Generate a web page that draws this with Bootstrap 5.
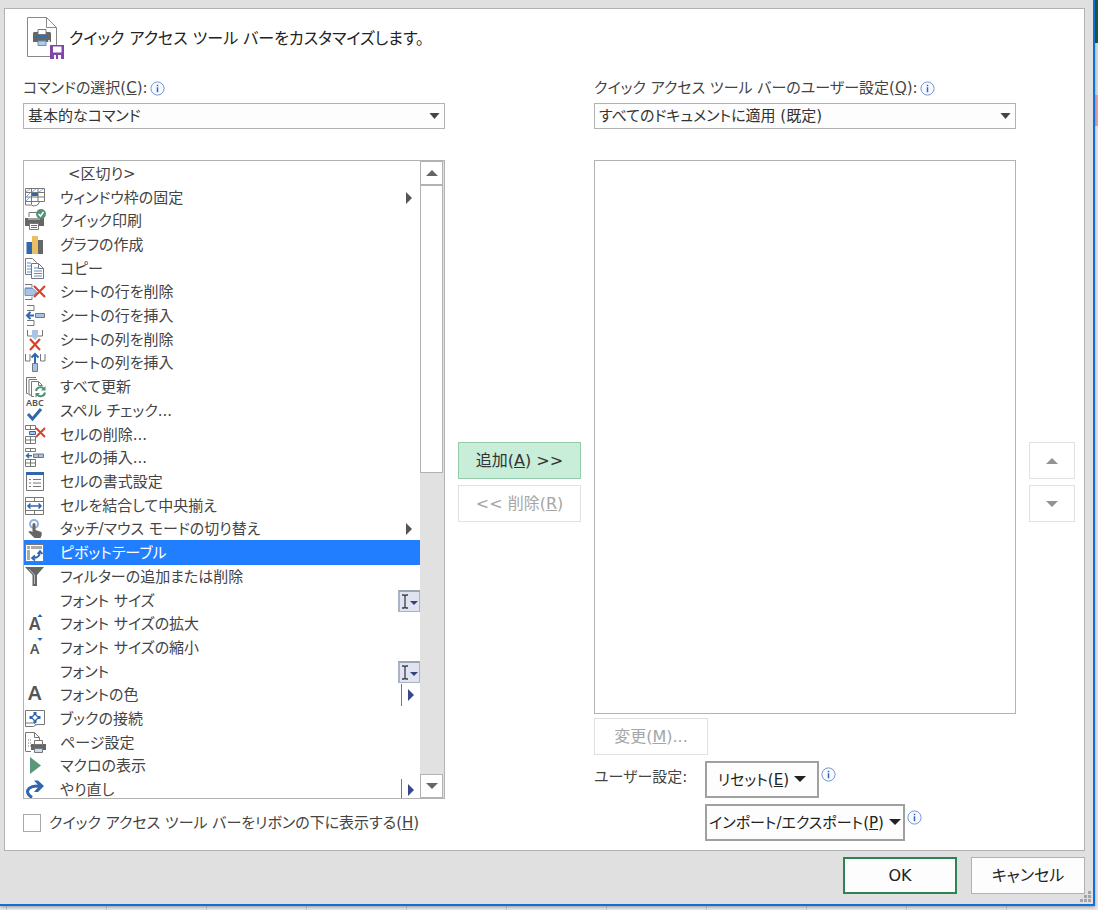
<!DOCTYPE html>
<html lang="ja">
<head>
<meta charset="utf-8">
<meta name="viewport" content="width=device-width, initial-scale=1">
<title>クイック アクセス ツール バー</title>
<link href="https://cdn.jsdelivr.net/npm/bootstrap@5.3.0/dist/css/bootstrap.min.css" rel="stylesheet">
<style>
  :root { --edge: #b2b2b2; --ink: #444; }
  body, button, select {
    font-family: "DejaVu Sans", "Noto Sans CJK JP", sans-serif;
    font-feature-settings: "palt";
  }
  body {
    font-size: 15px; line-height: 24px; color: var(--ink);
    min-height: 100vh; padding-right: 3px;
    background:
      linear-gradient(#1d5a3c 0 43px, #d5dce2 43px 95px, #e5a3ab 95px 126px, #e4e6e8 126px) right top / 3px 100% no-repeat,
      repeating-linear-gradient(90deg, transparent 0 6px, #c8c8c8 6px 7px, transparent 7px 100px) #e4e6e8;
  }
  .dialog { background: #e0e0e0; border: solid #0f70d7; border-width: 0 2px 2px 0; padding: 8px 8px 10px 4px; box-shadow: 0 1px 3px #0005; }
  .panel { background: #fff; border: 1px solid var(--edge); padding: 8px 9px 9px 18px; }
  .heading { font-size: 16px; color: #222; margin: 0; font-weight: 400; line-height: 24px; }
  .columns { display: grid; grid-template-columns: minmax(0,1fr) 123px minmax(0,1fr) 46px; column-gap: 13px; }
  .field-label { height: 22px; }
  .info { width: 15px; height: 15px; flex: none; margin-left: 2px; }
  .drop + .info { margin-top: 6px; }
  .form-select {
    height: 26px; padding: 0 24px 0 4px; border: 1px solid var(--edge); border-radius: 0; color: #333;
    font-size: 15px; line-height: 24px; background-color: #fdfdfd;
    background-image: url("data:image/svg+xml,%3Csvg xmlns='http://www.w3.org/2000/svg' viewBox='0 0 10 6'%3E%3Cpath d='M0 0h10L5 6z' fill='%23444'/%3E%3C/svg%3E");
    background-size: 11px 6px; background-position: right 4px center;
  }
  .body-row { margin-top: 31px; }
  .listbox { border: 1px solid var(--edge); }
  .commands { height: 639px; overflow: hidden; }
  .chosen { height: 554px; }
  .entries { display: grid; grid-auto-rows: 1fr; height: 641px; padding-top: 1px; min-width: 0; border-radius: 0; }
  .entries .list-group-item { display: flex; align-items: center; gap: 12px; border: 0; padding: 0; min-height: 0; line-height: 22px; background: none; color: var(--ink); white-space: nowrap; }
  .entries .list-group-item.active { background: #217fff; color: #fff; }
  .entries svg.ico { width: 24px; height: 24px; flex: none; overflow: visible; fill: none; stroke: #777; stroke-width: 1; }
  .ico text { font-family: "Noto Sans", sans-serif; }
  .entries .tail { margin-left: auto; }
  .split { border-left: 1px solid #777; height: 22px; width: 19px; padding-left: 6px; display: flex; align-items: center; }
  .combo { width: 22px; height: 22px; background: #e1e4f0; border: 1px solid #a9b3c4; border-top: 2px solid #9aa5b4; border-left-width: 2px; display: flex; }
  .scroller { width: 24px; padding-right: 1px; background: #e1e1e1; flex: none; }
  .scroller button, .thumb { width: 23px; border: 1px solid var(--edge); background: #fff; padding: 0; display: flex; align-items: center; justify-content: center; }
  .scroller button { height: 24px; }
  .thumb { height: 288px; }
  .cmd { border-radius: 0; height: 37px; padding: 0 2px; font-size: 16px; line-height: 24px; border: 1px solid var(--edge); background: #fdfdfd; color: #222; white-space: nowrap; }
  .cmd:disabled { opacity: 1; color: #a6a6a6; border-color: #e1e1e1; background: #fff; }
  .cmd.add { background: #c8edd8; border-color: #93cbab; color: #333; }
  .cmd.ok { border: 2px solid #2a8453; }
  .cmd.drop { border: 2px solid #a0a0a0; font-size: 15px; }
  .dropdown-toggle::after { border-width: 6px 6px 0; margin-left: 5px; vertical-align: 3px; }
  .w-std { width: 114px; }
  .w-long { width: 200px; }
  .caption { width: 111px; }
  .stack { display: flex; flex-direction: column; align-items: flex-start; gap: 6px; }
  .side { margin-top: 365px; align-items: stretch; }
  .buttons { margin-top: 6px; gap: 14px; }
  .form-check-input[type=checkbox] { width: 18px; height: 18px; border: 1px solid #aaa; border-radius: 0; margin: 0; }
  .grip { right: 1px; bottom: 1px; }
</style>
</head>
<body>
<svg class="d-none" xmlns="http://www.w3.org/2000/svg">
  <symbol id="info" viewBox="0 0 15 15"><circle cx="7.500" cy="7.500" r="6.600" fill="#f8faff" stroke="#7697d2"/><path d="M7.500 6.200v5M7.500 3.700v1.500" stroke="#3c64ad" stroke-width="1.500"/></symbol>
  <symbol id="up" viewBox="0 0 12 6"><path d="M0 6h12L6 0z" fill="#666"/></symbol>
  <symbol id="down" viewBox="0 0 12 6"><path d="M0 0h12L6 6z" fill="#666"/></symbol>
  <symbol id="right" viewBox="0 0 6 12"><path d="M0 0v12l6-6z"/></symbol>
  <symbol id="ibeam" viewBox="0 0 19 19"><path d="M2 3h2l1 1 1-1h2M2 16h2l1-1 1 1h2M5 4v11" stroke="#3a3d50" stroke-width="1.300" fill="none"/><path d="M10 9h8l-4 4z" fill="#34437c"/></symbol>
</svg>
<main class="dialog position-relative">
  <section class="panel">
    <header class="d-flex align-items-center gap-1">
      <svg width="38" height="44" viewBox="0 0 38 44" class="ms-1" fill="none">
        <path d="M.5.500h19l10 10v29H.500z" fill="#fff" stroke="#888"/><path d="M19.500.500v10h10" stroke="#888"/>
        <path d="M7 15h16l1 1v9H6v-9z" fill="#666"/><path d="M11 12.500h8v5h-8z" fill="#fff" stroke="#777"/><path d="M9 18h12v3H9z" fill="#2f70b5"/><path d="M11 24h8v4.500h-8z" fill="#a9cdec" stroke="#6b8fb5"/><circle cx="22" cy="24" r="1" fill="#fff"/>
        <path d="M23 28h14v14H23z" fill="#8145ae"/><path d="M26 29.500h8.500v6H26zM27 38h2v4h-2zM31 38h3v4h-3z" fill="#fff"/>
      </svg>
      <h1 class="heading">クイック アクセス ツール バーをカスタマイズします。</h1>
    </header>
    <div class="columns mt-3">
      <div>
        <div class="field-label d-flex align-items-center"><label for="source">コマンドの選択(<u>C</u>):</label><svg class="info"><use href="#info"/></svg></div>
        <select id="source" class="form-select mt-1"><option>基本的なコマンド</option></select>
        <div class="body-row listbox commands d-flex">
          <ul class="list-group entries flex-grow-1" role="listbox" aria-label="コマンド">
            <li class="list-group-item"><svg class="ico"></svg><span class="ps-2">&lt;区切り&gt;</span></li>
            <li class="list-group-item"><svg class="ico"><path d="M1.500 2.500h19v13h-19zM1.500 6.500h19M1.500 11h19M7.500 2.500v16M14 2.500v13M1.500 15v4h6l2 1 4-1 2-3"/><path d="M2 6l4-3M8 6l4-3M15 6l4-3M2 11l4-4M2 15l4-4" stroke="#88aede"/><path d="M8 7h6v3H8z" fill="#2f66ad" stroke="none"/></svg>ウィンドウ枠の固定<svg class="tail me-2" width="6" height="12" fill="#555"><use href="#right"/></svg></li>
            <li class="list-group-item"><svg class="ico"><path d="M5 8V3.500h9V8" fill="#fff"/><path d="M1 9h19v8H1z" fill="#666" stroke="none"/><path d="M4 10h12" stroke="#ddd"/><path d="M5.500 14.500h9v6h-9z" fill="#fff" stroke="#777"/><path d="M7 16.500h6M7 18.500h6" stroke="#3c78c4"/><circle cx="17" cy="5" r="5" fill="#559477" stroke="none"/><path d="M14.500 5l2 2 3-4" stroke="#fff" stroke-width="1.500"/></svg>クイック印刷</li>
            <li class="list-group-item"><svg class="ico"><path d="M2.500 9H8v12H2.500z" fill="#2f66ad" stroke="none"/><path d="M8 3h6v18H8z" fill="#e8bf62" stroke="none"/><path d="M14 7h5v14h-5z" fill="#666" stroke="none"/></svg>グラフの作成</li>
            <li class="list-group-item"><svg class="ico"><path d="M1.500 1.500h7l4 4v12h-11z" fill="#fff"/><path d="M3 6h4M3 9h5M3 12h5M3 15h5" stroke="#5d8ecb"/><path d="M7.500 6.500h7l5 5v10h-12z" fill="#fff"/><path d="M14.500 6.500v5h5"/><path d="M10 11h4M10 14h8M10 16.500h8M10 19h8" stroke="#5d8ecb"/></svg>コピー</li>
            <li class="list-group-item"><svg class="ico"><path d="M1 4.500h7v3M1 19.500h7v-3M1 8h7"/><path d="M1 8.500h8l4 4-4 3H1z" fill="#a9c3e6" stroke="#7394bf"/><path d="M10 6l11 11M21 6L10 17" stroke="#d8432a" stroke-width="2.200"/></svg>シートの行を削除</li>
            <li class="list-group-item"><svg class="ico"><path d="M3 1.500h7v5H3M3 16.500h7v5H3"/><path d="M11.500 9.500h9v4h-9z" fill="#a9c3e6"/><path d="M10 11.500H3M6.500 8L3 11.500 6.500 15" stroke="#2f66ad" stroke-width="2"/></svg>シートの行を挿入</li>
            <li class="list-group-item"><svg class="ico"><path d="M3.500 2v6h5M18.500 2v6h-5"/><path d="M8 2h6v7l-3 3-3-3z" fill="#a9c3e6" stroke="none"/><path d="M6 11l10 11M16 11L6 22" stroke="#d8432a" stroke-width="2.200"/></svg>シートの列を削除</li>
            <li class="list-group-item"><svg class="ico"><path d="M1.500 3v7H6M21 3v7h-4.500M6 3v7M16.500 3v7"/><path d="M8.500 12.500h5v8h-5z" fill="#a9c3e6"/><path d="M11 12V3M7.500 6.500L11 3l3.500 3.500" stroke="#2f66ad" stroke-width="2"/></svg>シートの列を挿入</li>
            <li class="list-group-item"><svg class="ico"><path d="M4 18.500H2.500v-16H12M7 20H5V4.500h8"/><path d="M10 21.500H7.500v-15h7l4 4" /><path d="M14.500 6.500v4h4"/><path d="M12 16a4.500 4.500 0 018-2M21 17.500a4.500 4.500 0 01-8 2" stroke="#4d9370" stroke-width="2"/><path d="M21.500 11v4.500H17zM11.500 22.500V18H16z" fill="#4d9370" stroke="none"/></svg>すべて更新</li>
            <li class="list-group-item"><svg class="ico"><text x="2" y="7" font-size="9" font-weight="600" fill="#555" stroke="none">ABC</text><path d="M4 15l4.500 5L17 10" stroke="#2f66ad" stroke-width="3"/></svg>スペル チェック...</li>
            <li class="list-group-item"><svg class="ico"><path d="M1.500 2.500h10v4h-10zM6.500 2.500v4M1.500 13.500h10v7h-10zM6.500 13.500v7M1.500 17h10"/><path d="M5.500 8.500h6v3h-6z" fill="#a9c3e6" stroke="#2f66ad"/><path d="M12 5l9 9M21 5l-9 9" stroke="#d8432a" stroke-width="2"/></svg>セルの削除...</li>
            <li class="list-group-item"><svg class="ico"><path d="M1.500 2.500h10v3h-10zM6.500 2.500v3M1.500 13.500h10v7h-10zM6.500 13.500v7M1.500 17h10"/><path d="M9.500 8h10v3.500h-10zM14.500 8v3.500" fill="#a9c3e6"/><path d="M8 9.800H3M5 7.500L2.500 9.800 5 12" stroke="#2f66ad" stroke-width="1.500"/></svg>セルの挿入...</li>
            <li class="list-group-item"><svg class="ico"><path d="M2.500 3.500h17v17h-17z" fill="#fff"/><path d="M2 3.500h18" stroke="#2f66ad" stroke-width="3"/><path d="M5 9.500h2M5 13h2M5 16.500h2M9 9.500h8M9 13h8M9 16.500h8"/></svg>セルの書式設定</li>
            <li class="list-group-item"><svg class="ico"><path d="M1.500 3.500h18v17h-18zM1.500 7.500h18M1.500 16.500h18M10.500 3.500v4M10.500 16.500v4" fill="#fff"/><path d="M4 12h13M6.500 9.500L4 12l2.500 2.500M14.500 9.500L17 12l-2.500 2.500" stroke="#2f66ad" stroke-width="1.500"/></svg>セルを結合して中央揃え</li>
            <li class="list-group-item"><svg class="ico"><circle cx="10" cy="7" r="4" stroke="#8db1de" stroke-width="2"/><path d="M8.500 7q1.500-2 3 0v6l6 2q1 3-1 6h-6l-6-6q1-2 4 0z" fill="#666" stroke="none"/></svg>タッチ/マウス モードの切り替え<svg class="tail me-2" width="6" height="12" fill="#555"><use href="#right"/></svg></li>
            <li class="list-group-item active" aria-selected="true"><svg class="ico"><path d="M1.500 3.500h18v17h-18z" fill="#fff"/><path d="M3 5h3v3H3zM7 5h11v3H7zM3 9h3v10H3z" fill="#aaa" stroke="none"/><path d="M9 17q7 0 7-6M13.500 13L16 10l2.500 3M11 14.500L8 17l3 2.500" stroke="#2f66ad" stroke-width="1.700"/></svg>ピボットテーブル</li>
            <li class="list-group-item"><svg class="ico"><path d="M1 2h19l-7 8v11H8.500V10z" fill="#666" stroke="none"/><path d="M5 4l5.500 6v9" stroke="#bbb"/></svg>フィルターの追加または削除</li>
            <li class="list-group-item"><svg class="ico"></svg>フォント サイズ<span class="tail combo"><svg width="19" height="19"><use href="#ibeam"/></svg></span></li>
            <li class="list-group-item"><svg class="ico"><text x="5" y="18" font-size="17" font-weight="600" fill="#555" stroke="none">A</text><path d="M13.500 5h5L16 2z" fill="#2f66ad" stroke="none"/></svg>フォント サイズの拡大</li>
            <li class="list-group-item"><svg class="ico"><text x="6" y="18" font-size="14" font-weight="600" fill="#555" stroke="none">A</text><path d="M13.500 2h5L16 5z" fill="#2f66ad" stroke="none"/></svg>フォント サイズの縮小</li>
            <li class="list-group-item"><svg class="ico"></svg>フォント<span class="tail combo"><svg width="19" height="19"><use href="#ibeam"/></svg></span></li>
            <li class="list-group-item"><svg class="ico"><text x="4" y="17" font-size="20" font-weight="600" fill="#555" stroke="none">A</text></svg>フォントの色<span class="tail split"><svg width="6" height="12" fill="#3b478a"><use href="#right"/></svg></span></li>
            <li class="list-group-item"><svg class="ico"><path d="M1.500 3.500h19v14h-8l-3 2h-8z" fill="#fff"/><path d="M1.500 16h8l3 2"/><path d="M11 7l3.500 3.500L11 14l-3.500-3.500z" stroke="#2f66ad" stroke-width="1.300"/><path d="M9.500 5h3v2.500h-3zM9.500 13.500h3V16h-3zM5.500 9H8v3H5.500zM14 9h2.500v3H14z" fill="#2f66ad" stroke="none"/></svg>ブックの接続</li>
            <li class="list-group-item"><svg class="ico"><path d="M1.500 20V1.500h9l5 5V9M10.500 1.500v5h5M1.500 20.500H7"/><path d="M4 9h4M4 12h4M4 15h3" stroke-dasharray="1 1"/><path d="M7 13h15v6H7z" fill="#666" stroke="none"/><path d="M10.500 9.500h8v4h-8z" fill="#fff"/><path d="M10.500 17.500h8v4h-8z" fill="#c8def5"/></svg>ページ設定</li>
            <li class="list-group-item"><svg class="ico"><path d="M6 3v17l11-8.500z" fill="#5a987c" stroke="none"/></svg>マクロの表示</li>
            <li class="list-group-item"><svg class="ico"><path d="M8 19.500Q1 15 5 10.500 8 7.500 16 8" stroke="#2f66ad" stroke-width="3"/><path d="M10 2.500h4l6 5.500-6 6h-4l5-6z" fill="#2f66ad" stroke="none"/></svg>やり直し<span class="tail split"><svg width="6" height="12" fill="#3b478a"><use href="#right"/></svg></span></li>
          </ul>
          <div class="scroller d-flex flex-column">
            <button type="button" aria-label="上へ"><svg width="12" height="6"><use href="#up"/></svg></button>
            <div class="thumb"></div>
            <button type="button" class="mt-auto" aria-label="下へ"><svg width="12" height="6"><use href="#down"/></svg></button>
          </div>
        </div>
        <div class="d-flex align-items-center gap-2 mt-2 pt-1">
          <input class="form-check-input" type="checkbox" id="below"><label for="below">クイック アクセス ツール バーをリボンの下に表示する(<u>H</u>)</label>
        </div>
      </div>
      <div class="stack side">
        <button type="button" class="btn cmd add">追加(<u>A</u>) &gt;&gt;</button>
        <button type="button" class="btn cmd" disabled>&lt;&lt; 削除(<u>R</u>)</button>
      </div>
      <div>
        <div class="field-label d-flex align-items-center"><label for="target">クイック アクセス ツール バーのユーザー設定(<u>Q</u>):</label><svg class="info"><use href="#info"/></svg></div>
        <select id="target" class="form-select mt-1"><option>すべてのドキュメントに適用 (既定)</option></select>
        <div class="body-row listbox chosen" role="listbox" aria-label="ツール バーのコマンド"></div>
        <div class="stack mt-1">
          <button type="button" class="btn cmd w-std" disabled>変更(<u>M</u>)...</button>
          <div class="d-flex">
            <span class="caption flex-shrink-0 text-nowrap pt-1">ユーザー設定:</span>
            <div class="stack">
              <div class="d-flex"><button type="button" class="btn cmd drop w-std dropdown-toggle">リセット(<u>E</u>)</button><svg class="info"><use href="#info"/></svg></div>
              <div class="d-flex"><button type="button" class="btn cmd drop w-long dropdown-toggle">インポート/エクスポート(<u>P</u>)</button><svg class="info"><use href="#info"/></svg></div>
            </div>
          </div>
        </div>
      </div>
      <div class="stack side">
        <button type="button" class="btn cmd" disabled aria-label="上へ移動"><svg width="12" height="6" opacity=".7"><use href="#up"/></svg></button>
        <button type="button" class="btn cmd" disabled aria-label="下へ移動"><svg width="12" height="6" opacity=".7"><use href="#down"/></svg></button>
      </div>
    </div>
  </section>
  <footer class="buttons d-flex justify-content-end">
    <button type="button" class="btn cmd ok w-std">OK</button>
    <button type="button" class="btn cmd w-std">キャンセル</button>
  </footer>
  <svg class="grip position-absolute" width="12" height="12" fill="#a5a5a5"><path d="M8 0h3v3H8zM8 4h3v3H8zM8 8h3v3H8zM4 4h3v3H4zM4 8h3v3H4zM0 8h3v3H0z"/></svg>
</main>
<script src="https://cdn.jsdelivr.net/npm/bootstrap@5.3.0/dist/js/bootstrap.bundle.min.js"></script>
</body>
</html>
